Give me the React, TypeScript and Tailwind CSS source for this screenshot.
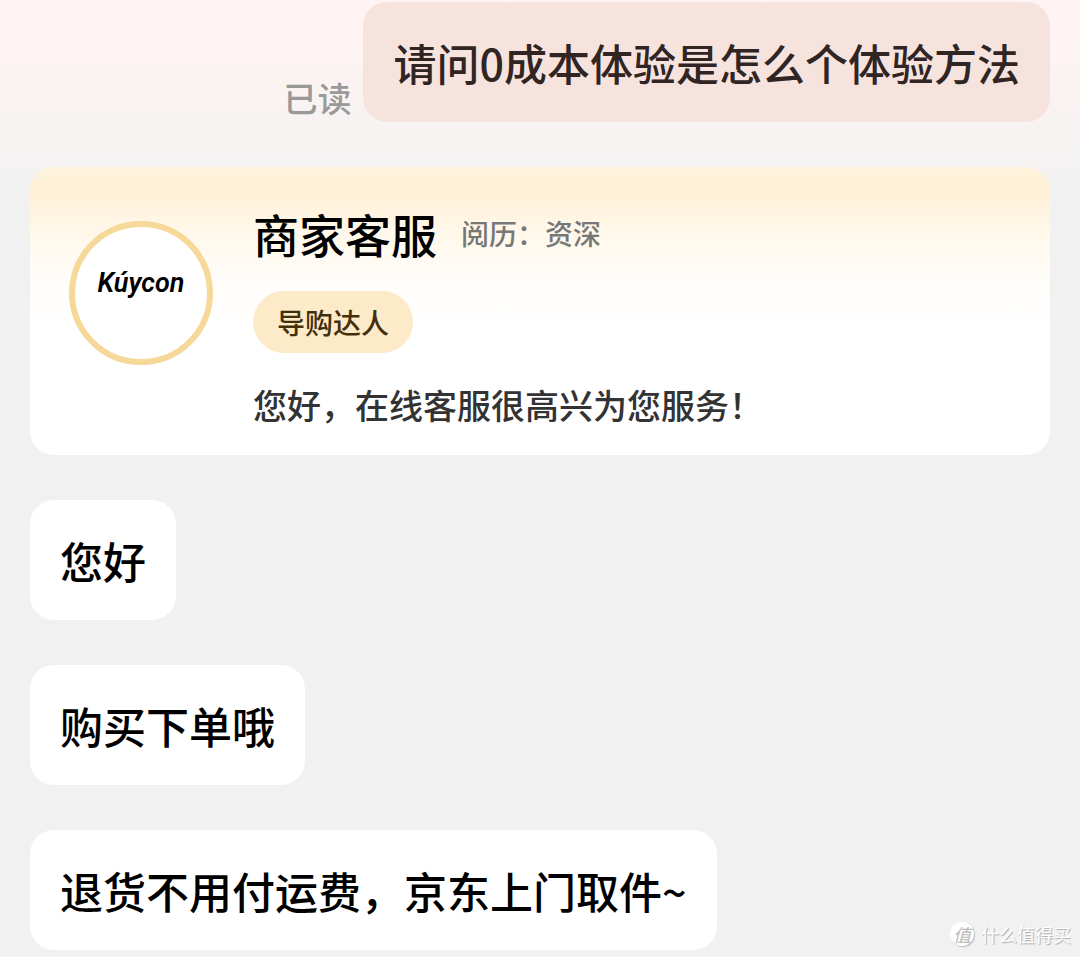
import React from 'react';

const replies = ['您好', '购买下单哦', '退货不用付运费，京东上门取件~'];

const Bubble: React.FC<{ text: string; className: string }> = ({ text, className }) => (
    <p className={`rounded-3xl px-[30px] py-[30px] text-[43px] leading-[60px] font-medium ${className}`}>{text}</p>
);

const App: React.FC = () => {
    return (
        <div className="relative min-h-screen overflow-hidden bg-[#f1f1f1] bg-[linear-gradient(to_bottom,#fff4f3_0px,#fef3f2_40px,#f7f3f2_125px,#f1f1f1_200px)] font-['Noto_Sans_CJK_SC',sans-serif]">
            <main className="flex flex-col items-start gap-[45px] px-[30px] pt-[2px] pb-2">

                {/* Customer question */}
                <div className="flex items-end gap-3 self-end">
                    <span className="shrink-0 text-[34px] leading-[48px] font-medium text-[#999999]">已读</span>
                    <Bubble text="请问0成本体验是怎么个体验方法" className="bg-[#f7e3dd] text-[#302523]" />
                </div>

                {/* Agent card */}
                <section className="flex w-full items-start gap-10 rounded-3xl bg-[linear-gradient(to_bottom,#fff4de_0px,#ffefd5_22px,#fff8ea_65px,#fffdf9_110px,#ffffff_160px)] pt-[36px] pr-10 pb-[24px] pl-[39px]">
                    <div className="mt-[18px] flex size-36 shrink-0 items-center justify-center rounded-full border-[6px] border-[#f6d898] bg-white pb-5">
                        <span className="font-['Roboto',sans-serif] text-[27px] leading-8 font-semibold text-black italic">Kúycon</span>
                    </div>
                    <div className="flex flex-col items-start">
                        <div className="flex items-center gap-6">
                            <h1 className="text-[46px] leading-[60px] font-medium text-black">商家客服</h1>
                            <span className="text-[28px] leading-10 font-medium text-[#777777]">阅历：资深</span>
                        </div>
                        <span className="mt-7 rounded-full bg-[#fdeac8] px-6 py-[11px] text-[28px] leading-10 font-medium text-[#42300c]">导购达人</span>
                        <p className="mt-[26px] text-[34px] leading-[52px] font-medium text-[#333333]">您好，在线客服很高兴为您服务！</p>
                    </div>
                </section>

                {/* Agent replies */}
                {replies.map((text) => (
                    <Bubble key={text} text={text} className="bg-white text-black" />
                ))}
            </main>

            {/* Watermark */}
            <div className="absolute right-[9px] bottom-[11px] flex items-center gap-[7px] text-white">
                <span className="flex size-6 items-center justify-center rounded-full bg-white text-[18px] leading-6 text-[#bbbbbb] italic shadow-[1px_1px_1px_#bbbbbb]">值</span>
                <span className="text-[18px] leading-[26px] [text-shadow:1px_1px_1px_#aaaaaa]">什么值得买</span>
            </div>
        </div>
    );
};

export default App;
